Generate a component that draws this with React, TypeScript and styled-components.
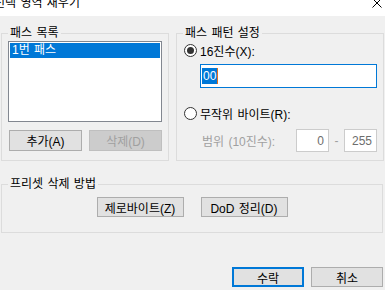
import React from "react";
import styled, { createGlobalStyle } from "styled-components";

const Global = createGlobalStyle`
  html, body { margin: 0; padding: 0; background: #f0f0f0; }
  * { box-sizing: border-box; }
`;

const Window = styled.div`
  width: 385px;
  height: 290px;
  overflow: hidden;
  background: #f0f0f0;
  font-family: "Liberation Sans", "Noto Sans CJK KR", sans-serif;
  font-size: 12px;
  word-spacing: 1px;
  color: #000;
`;

const TitleBar = styled.div`
  height: 16px;
  background: #fff;
  display: flex;
  justify-content: space-between;
  align-items: flex-start;
  overflow: hidden;
`;

const Title = styled.div`
  margin: -5px 0 0 -6px;
  line-height: 16px;
  font-size: 12px;
  white-space: nowrap;
`;

const CloseIcon = styled.svg`
  margin: -2px 3px 0 0;
  width: 10px;
  height: 10px;
`;

const Body = styled.div`
  padding: 17px 0 0 1px;
  display: flex;
  flex-direction: column;
`;

const TopRow = styled.div`
  display: flex;
  gap: 7px;
`;

const Group = styled.div<{ $w: number; $h: number }>`
  width: ${(p) => p.$w}px;
  height: ${(p) => p.$h}px;
  border: 1px solid #dcdcdc;
  display: flex;
  flex-direction: column;
`;

const Legend = styled.div`
  align-self: flex-start;
  margin: -8px 0 0 6px;
  padding: 0 2px;
  line-height: 14px;
  background: #f0f0f0;
  white-space: nowrap;
`;

const ListBox = styled.div`
  margin: 1px 0 0 6px;
  width: 154px;
  height: 81px;
  border: 1px solid #828790;
  background: #fff;
  padding: 1px;
`;

const ListItem = styled.div<{ $selected?: boolean }>`
  height: 15px;
  line-height: 15px;
  padding-left: 2px;
  background: ${(p) => (p.$selected ? "#0078d7" : "transparent")};
  color: ${(p) => (p.$selected ? "#fff" : "#000")};
`;

const ButtonRow = styled.div`
  display: flex;
  gap: 7px;
  margin: 8px 0 0 7px;
`;

const Button = styled.div<{ $w: number; $h: number; $disabled?: boolean; $default?: boolean }>`
  width: ${(p) => p.$w}px;
  height: ${(p) => p.$h}px;
  display: flex;
  align-items: center;
  justify-content: center;
  background: ${(p) => (p.$disabled ? "#cccccc" : "#e1e1e1")};
  border: ${(p) => (p.$default ? "2px solid #0078d7" : p.$disabled ? "1px solid #bfbfbf" : "1px solid #adadad")};
  color: ${(p) => (p.$disabled ? "#a0a0a0" : "#000")};
  white-space: nowrap;
`;

const RadioRow = styled.div<{ $mt: number }>`
  display: flex;
  align-items: center;
  gap: 3px;
  margin: ${(p) => p.$mt}px 0 0 7px;
  height: 14px;
`;

const Radio = styled.div<{ $checked?: boolean }>`
  width: 13px;
  height: 13px;
  border-radius: 50%;
  border: 1px solid #333;
  background: #fff;
  display: flex;
  align-items: center;
  justify-content: center;
  &::after {
    content: "";
    display: ${(p) => (p.$checked ? "block" : "none")};
    width: 7px;
    height: 7px;
    border-radius: 50%;
    background: #333;
  }
`;

const HexInput = styled.div`
  margin: 7px 0 0 23px;
  width: 177px;
  height: 24px;
  border: 1px solid #0078d7;
  background: #fff;
  display: flex;
  align-items: center;
  padding-left: 1px;
`;

const Selected = styled.span`
  background: #0078d7;
  color: #fff;
  line-height: 16px;
  padding: 0 1px;
  border-right: 1px solid #e07020;
`;

const RangeRow = styled.div`
  display: flex;
  align-items: center;
  margin: 9px 0 0 0;
  padding: 0 6px 0 25px;
`;

const RangeLabel = styled.div`
  flex: 1;
  color: #a0a0a0;
  white-space: nowrap;
`;

const NumBox = styled.div`
  width: 33px;
  height: 23px;
  border: 1px solid #cccccc;
  background: #fff;
  color: #6d6d6d;
  display: flex;
  align-items: center;
  justify-content: flex-end;
  padding-right: 4px;
`;

const Dash = styled.div`
  width: 15px;
  text-align: center;
  color: #a0a0a0;
`;

const PresetGroup = styled(Group)`
  margin-top: 23px;
`;

const PresetButtons = styled.div`
  display: flex;
  justify-content: center;
  gap: 17px;
  margin-top: 6px;
`;

const Footer = styled.div`
  width: 382px;
  display: flex;
  justify-content: flex-end;
  gap: 7px;
  margin-top: 34px;
`;

export default function App() {
  return (
    <>
      <Global />
      <Window>
        <TitleBar>
          <Title>선택 영역 새우기</Title>
          <CloseIcon viewBox="0 0 10 10">
            <path d="M0.5 0.5 L9.5 9.5 M9.5 0.5 L0.5 9.5" stroke="#000" strokeWidth="1" fill="none" />
          </CloseIcon>
        </TitleBar>
        <Body>
          <TopRow>
            <Group $w={168} $h={128}>
              <Legend>패스 목록</Legend>
              <ListBox>
                <ListItem $selected>1번 패스</ListItem>
              </ListBox>
              <ButtonRow>
                <Button $w={73} $h={21}>추가(A)</Button>
                <Button $w={73} $h={21} $disabled>삭제(D)</Button>
              </ButtonRow>
            </Group>
            <Group $w={208} $h={128}>
              <Legend>패스 패턴 설정</Legend>
              <RadioRow $mt={3}>
                <Radio $checked />
                <span>16진수(X):</span>
              </RadioRow>
              <HexInput>
                <Selected>00</Selected>
              </HexInput>
              <RadioRow $mt={18}>
                <Radio />
                <span>무작위 바이트(R):</span>
              </RadioRow>
              <RangeRow>
                <RangeLabel>범위 (10진수):</RangeLabel>
                <NumBox>0</NumBox>
                <Dash>-</Dash>
                <NumBox>255</NumBox>
              </RangeRow>
            </Group>
          </TopRow>
          <PresetGroup $w={382} $h={49}>
            <Legend>프리셋 삭제 방법</Legend>
            <PresetButtons>
              <Button $w={87} $h={20}>제로바이트(Z)</Button>
              <Button $w={87} $h={20}>DoD 정리(D)</Button>
            </PresetButtons>
          </PresetGroup>
          <Footer>
            <Button $w={72} $h={20} $default>수락</Button>
            <Button $w={72} $h={20}>취소</Button>
          </Footer>
        </Body>
      </Window>
    </>
  );
}
